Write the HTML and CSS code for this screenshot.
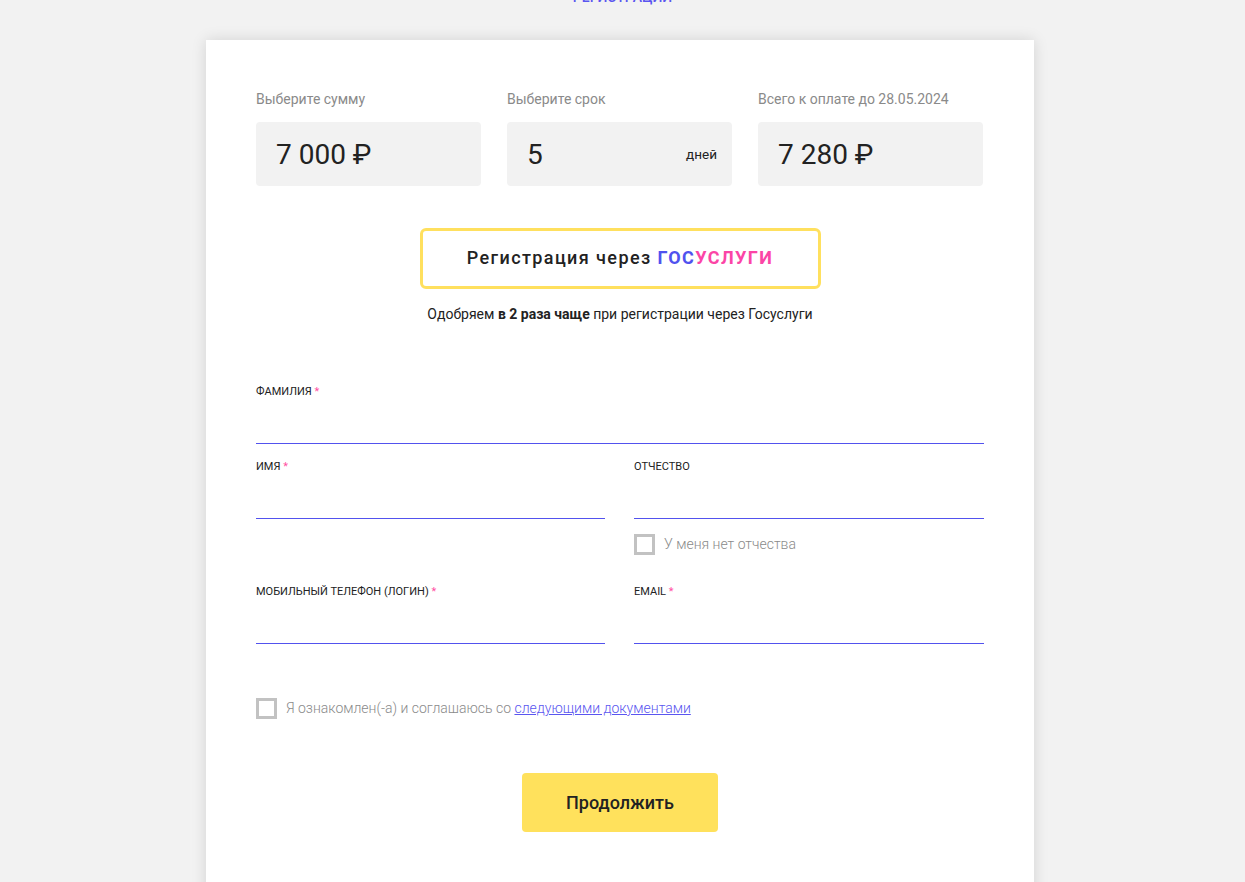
FILE: index.html
```html
<!DOCTYPE html>
<html lang="ru">
<head>
<meta charset="utf-8">
<title>Регистрация</title>
<link rel="stylesheet" href="styles.css">
</head>
<body>
<div class="steps">Регистрации</div>
<main class="card">
  <section class="calc">
    <div class="calc-col">
      <div class="calc-label">Выберите сумму</div>
      <div class="calc-box"><span class="calc-value">7 000 ₽</span></div>
    </div>
    <div class="calc-col">
      <div class="calc-label">Выберите срок</div>
      <div class="calc-box"><span class="calc-value">5</span><span class="calc-unit">дней</span></div>
    </div>
    <div class="calc-col">
      <div class="calc-label">Всего к оплате до 28.05.2024</div>
      <div class="calc-box"><span class="calc-value">7 280 ₽</span></div>
    </div>
  </section>

  <div class="gos-wrap">
    <button class="gos-btn" type="button">Регистрация через <span class="gos-blue">ГОС</span><span class="gos-pink">УСЛУГИ</span></button>
    <p class="gos-note">Одобряем <b>в 2 раза чаще</b> при регистрации через Госуслуги</p>
  </div>

  <form class="form">
    <div class="field">
      <label class="field-label">Фамилия <span class="req">*</span></label>
      <div class="field-input"></div>
    </div>
    <div class="row">
      <div class="field">
        <label class="field-label">Имя <span class="req">*</span></label>
        <div class="field-input"></div>
      </div>
      <div class="col">
        <div class="field">
          <label class="field-label">Отчество</label>
          <div class="field-input"></div>
        </div>
        <label class="check check-small"><span class="box"></span><span>У меня нет отчества</span></label>
      </div>
    </div>
    <div class="row">
      <div class="field">
        <label class="field-label">Мобильный телефон (логин) <span class="req">*</span></label>
        <div class="field-input"></div>
      </div>
      <div class="field">
        <label class="field-label">Email <span class="req">*</span></label>
        <div class="field-input"></div>
      </div>
    </div>
    <label class="check check-agree"><span class="box"></span><span>Я ознакомлен(-а) и соглашаюсь со <a href="#" class="link">следующими документами</a></span></label>
    <div class="submit-wrap">
      <button class="submit" type="button">Продолжить</button>
    </div>
  </form>
</main>
</body>
</html>
```
FILE: styles.css
```css
* { box-sizing: border-box; }
html, body { margin: 0; padding: 0; }
body {
  background: #f2f2f2;
  font-family: Roboto, "Noto Sans", sans-serif;
  color: #222;
  overflow: hidden;
}
.steps {
  text-align: center;
  margin: -11px 0 0 0;
  height: 16px;
  line-height: 16px;
  font-size: 14px;
  font-weight: 500;
  text-transform: uppercase;
  color: #5a56f0;
}
.card {
  width: 828px;
  margin: 35px 0 0 206px;
  background: #fff;
  box-shadow: 0 0 14px rgba(0,0,0,0.13);
  padding: 51px 50px 60px 50px;
  min-height: 900px;
}
.calc {
  display: grid;
  grid-template-columns: repeat(3, 225px);
  column-gap: 26px;
}
.calc-label {
  font-size: 14px;
  line-height: 16px;
  color: #8a8a8a;
  margin-bottom: 15px;
}
.calc-box {
  height: 64px;
  background: #f2f2f2;
  border-radius: 4px;
  display: flex;
  align-items: center;
  justify-content: space-between;
  padding: 0 15px 0 20px;
}
.calc-value {
  font-size: 28px;
  color: #222;
}
.calc-unit {
  font-size: 13.5px;
  color: #222;
}
.gos-wrap {
  display: flex;
  flex-direction: column;
  align-items: center;
  margin-top: 42px;
}
.gos-btn {
  width: 401px;
  height: 61px;
  border: 3px solid #ffe05e;
  border-radius: 6px;
  background: #fff;
  font-family: Roboto, sans-serif;
  font-size: 18px;
  font-weight: 500;
  letter-spacing: 1.4px;
  color: #222;
  cursor: pointer;
  padding: 0 0 3px 0;
}
.gos-blue { color: #5052ee; font-weight: 700; }
.gos-pink { color: #fb45a6; font-weight: 700; }
.gos-note {
  margin: 15px 0 0 0;
  font-size: 14px;
  line-height: 20px;
  color: #222;
}
.gos-note b { font-weight: 700; }
.form {
  margin-top: 61px;
}
.row {
  display: grid;
  grid-template-columns: 349px 350px;
  column-gap: 29px;
}
.field { margin-bottom: 16px; }
.row .col .field { margin-bottom: 15px; }
.field-label {
  display: block;
  font-size: 11px;
  line-height: 14px;
  text-transform: uppercase;
  color: #222;
}
.req { color: #ff4fa3; }
.field-input {
  height: 45px;
  border-bottom: 1px solid #5252ee;
}
.check {
  display: flex;
  align-items: center;
  font-size: 14px;
  line-height: 21px;
  font-weight: 300;
  color: #8a8a8a;
}
.box {
  width: 21px;
  height: 21px;
  border: 3px solid #c2c2c2;
  margin-right: 9px;
  flex-shrink: 0;
}
.check-small { margin-bottom: 30px; }
.check-agree { margin-top: 38px; }
.link { color: #5a56f0; text-decoration: underline; }
.submit-wrap {
  display: flex;
  justify-content: center;
  margin-top: 54px;
}
.submit {
  width: 196px;
  height: 59px;
  background: #ffe15c;
  border: none;
  border-radius: 4px;
  font-family: Roboto, sans-serif;
  font-size: 18px;
  font-weight: 500;
  color: #222;
  cursor: pointer;
}
```
